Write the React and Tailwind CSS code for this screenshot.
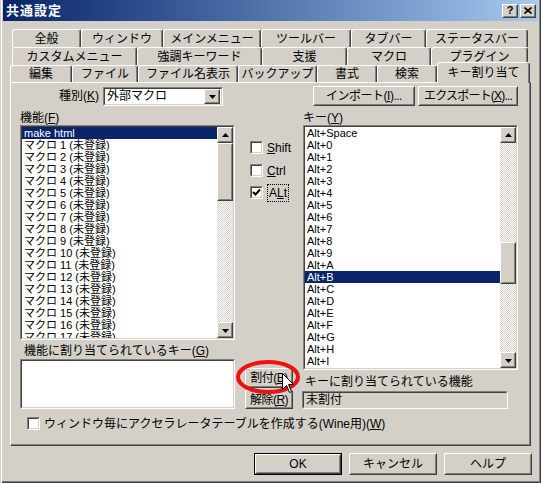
import React from 'react';

const Raised = ({ className = '', inner = '', children }) => (
  <div className={`border border-t-white border-l-white border-r-[#404040] border-b-[#404040] bg-[#d4d0c8] ${className}`}>
    <div className={`h-full w-full border border-t-[#d4d0c8] border-l-[#d4d0c8] border-r-[#808080] border-b-[#808080] flex items-center justify-center whitespace-nowrap ${inner}`}>
      {children}
    </div>
  </div>
);

const Sunken = ({ className = '', inner = '', children }) => (
  <div className={`border border-t-[#808080] border-l-[#808080] border-r-white border-b-white ${className}`}>
    <div className={`h-full w-full border border-t-[#404040] border-l-[#404040] border-r-[#d4d0c8] border-b-[#d4d0c8] ${inner}`}>
      {children}
    </div>
  </div>
);

const U = ({ children }) => <span className="underline underline-offset-[1px]">{children}</span>;

const Arrow = ({ down }) => (
  <svg width="7" height="4" viewBox="0 0 7 4" className={down ? 'mt-[1px]' : ''}>
    <path d={down ? 'M0 0 H7 L3.5 4 Z' : 'M0 4 H7 L3.5 0 Z'} fill="#000" />
  </svg>
);

const Check = () => (
  <svg width="9" height="9" viewBox="0 0 9 9">
    <polyline points="1,4 3.5,6.5 8,1.5" fill="none" stroke="#000" strokeWidth="2" />
  </svg>
);

const track = "bg-[image:repeating-conic-gradient(#ffffff_0%_25%,#d4d0c8_0%_50%)] bg-[length:2px_2px]";

const ScrollBar = ({ before, thumb }) => (
  <div className="w-[16px] h-full flex flex-col">
    <Raised className="h-[16px] w-[16px] shrink-0"><Arrow /></Raised>
    <div className={`${before} ${track} shrink-0`} />
    <Raised className={`${thumb} w-[16px] shrink-0`} />
    <div className={`flex-1 ${track}`} />
    <Raised className="h-[16px] w-[16px] shrink-0"><Arrow down /></Raised>
  </div>
);

const ListBox = ({ items, selected, className, before, thumb }) => (
  <Sunken className={className} inner="bg-white flex">
    <div className="flex-1 overflow-hidden">
      {items.map((t, i) => (
        <div
          key={t}
          className={`h-[12px] text-[11px] leading-[12px] pl-[2px] whitespace-nowrap overflow-hidden ${i === selected ? 'bg-[#0a246a] text-white' : ''}`}
        >
          {t}
        </div>
      ))}
    </div>
    <ScrollBar before={before} thumb={thumb} />
  </Sunken>
);

const CheckBox = ({ checked, children, className = '' }) => (
  <div className={`flex items-center h-[13px] ${className}`}>
    <Sunken className="w-[13px] h-[13px] shrink-0" inner="bg-white flex items-center justify-center">
      {checked && <Check />}
    </Sunken>
    <div className="ml-[4px] whitespace-nowrap">{children}</div>
  </div>
);

const Tab = ({ w, children, sel }) => (
  <div
    className={`${w} ${sel ? 'h-[21px] -mb-[1px] relative z-10 bg-[#d4d0c8]' : 'h-full'} shrink-0 border-t border-l border-white border-r border-r-[#404040] rounded-t-[3px] shadow-[inset_-1px_0_0_#808080] flex items-center justify-center whitespace-nowrap`}
  >
    {children}
  </div>
);

const macros = ['make html', ...Array.from({ length: 17 }, (_, i) => `マクロ ${i + 1} (未登録)`)];
const keys = [
  'Alt+Space',
  ...'0123456789ABCDEFGHIJ'.split('').map((c) => `Alt+${c}`),
];

export default function App() {
  return (
    <div className="relative w-[541px] h-[483px] overflow-hidden bg-[#d4d0c8] text-black text-[12px] leading-[12px] font-['Liberation_Sans','Noto_Sans_CJK_JP',sans-serif] shadow-[inset_1px_0_0_#d4d0c8,inset_2px_0_0_#ffffff,inset_-1px_-1px_0_#404040,inset_-2px_-2px_0_#808080]">
      {/* title bar */}
      <div className="mx-[3px] h-[21px] bg-linear-to-r from-[#0a246a] to-[#a6caf0] flex items-center pl-[3px] pr-[2px]">
        <span className="font-bold text-white text-[13px] leading-[13px] tracking-[1px]">共通設定</span>
        <div className="ml-auto flex gap-[2px]">
          <Raised className="w-[16px] h-[14px]" inner="font-bold text-[11px] leading-[11px]">?</Raised>
          <Raised className="w-[16px] h-[14px]">
            <svg width="8" height="7" viewBox="0 0 8 7">
              <path d="M0.5 0.5 L7.5 6.5 M7.5 0.5 L0.5 6.5" stroke="#000" strokeWidth="1.6" />
            </svg>
          </Raised>
        </div>
      </div>

      {/* tabs */}
      <div className="mt-[8px]">
        <div className="flex h-[18px] pl-[12px]">
          <Tab w="w-[69px]">全般</Tab>
          <Tab w="w-[82px]">ウィンドウ</Tab>
          <Tab w="w-[98px]">メインメニュー</Tab>
          <Tab w="w-[90px]">ツールバー</Tab>
          <Tab w="w-[75px]">タブバー</Tab>
          <Tab w="w-[102px]">ステータスバー</Tab>
        </div>
        <div className="flex h-[18px] pl-[12px]">
          <Tab w="w-[125px]">カスタムメニュー</Tab>
          <Tab w="w-[125px]">強調キーワード</Tab>
          <Tab w="w-[85px]">支援</Tab>
          <Tab w="w-[84px]">マクロ</Tab>
          <Tab w="w-[97px]">プラグイン</Tab>
        </div>
        <div className="flex items-end h-[17px] pl-[10px]">
          <Tab w="w-[62px]">編集</Tab>
          <Tab w="w-[66px]">ファイル</Tab>
          <Tab w="w-[100px]">ファイル名表示</Tab>
          <Tab w="w-[79px]">バックアップ</Tab>
          <Tab w="w-[60px]">書式</Tab>
          <Tab w="w-[60px]">検索</Tab>
          <Tab w="w-[93px]" sel>キー割り当て</Tab>
        </div>
      </div>

      {/* panel */}
      <div className="ml-[10px] w-[521px] h-[364px] border-l border-t border-white border-r border-b border-r-[#404040] border-b-[#404040]">
        <div className="h-full border-r border-b border-[#808080] pl-[9px] pt-[3px]">
          <div className="flex items-center h-[20px]">
            <div className="w-[83px] text-right pr-[4px]">種別(<U>K</U>)</div>
            <Sunken className="w-[120px] h-[19px]" inner="bg-white flex items-center pl-[2px] pr-[1px]">
              <span className="flex-1">外部マクロ</span>
              <Raised className="w-[16px] h-[15px]"><Arrow down /></Raised>
            </Sunken>
            <Raised className="ml-[90px] w-[102px] h-[20px]" inner="tracking-[-0.5px]">インポート(<U>I</U>)...</Raised>
            <Raised className="ml-[3px] w-[100px] h-[20px]" inner="tracking-[-0.8px]">エクスポート(<U>X</U>)...</Raised>
          </div>

          <div className="flex items-start">
            {/* left */}
            <div className="w-[215px] flex flex-col">
              <div className="h-[19px] flex items-end pb-[1px]">機能(<U>F</U>)</div>
              <ListBox items={macros} selected={0} className="w-[215px] h-[215px]" before="h-0" thumb="h-[58px]" />
              <div className="h-[19px] flex items-end pl-[4px] pb-[2px]">機能に割り当てられているキー(<U>G</U>)</div>
              <Sunken className="w-[215px] h-[50px]" inner="bg-white" />
            </div>

            {/* middle */}
            <div className="w-[67px] flex flex-col pt-[35px]">
              <CheckBox className="pl-[15px]"><U>S</U>hift</CheckBox>
              <CheckBox className="pl-[15px] mt-[10px]"><U>C</U>trl</CheckBox>
              <CheckBox className="pl-[15px] mt-[9px]" checked>
                <span className="border border-dotted border-black px-[1px] py-[1px]">A<U>L</U>t</span>
              </CheckBox>
              <Raised className="ml-[10px] mt-[169px] w-[48px] h-[20px]" inner="tracking-[-0.5px]">割付(<U>B</U>)</Raised>
              <Raised className="ml-[10px] mt-[2px] w-[48px] h-[19px]" inner="tracking-[-0.5px]">解除(<U>R</U>)</Raised>
            </div>

            {/* right */}
            <div className="w-[216px] flex flex-col">
              <div className="h-[19px] flex items-end pb-[1px] pl-[1px]">キー(<U>Y</U>)</div>
              <ListBox items={keys} selected={12} className="ml-[1px] w-[215px] h-[245px]" before="h-[99px]" thumb="h-[42px]" />
              <div className="h-[21px] flex items-end pl-[3px] pb-[3px]">キーに割り当てられている機能</div>
              <Sunken className="w-[206px] h-[18px]" inner="bg-[#d4d0c8] flex items-center pl-[2px]">未割付</Sunken>
            </div>
          </div>

          <CheckBox className="mt-[8px] ml-[7px]">ウィンドウ毎にアクセラレータテーブルを作成する(Wine用)(<U>W</U>)</CheckBox>
        </div>
      </div>

      {/* bottom buttons */}
      <div className="flex mt-[7px] pl-[254px] gap-[7px]">
        <div className="w-[88px] h-[22px] border border-black">
          <Raised className="w-full h-full">OK</Raised>
        </div>
        <Raised className="w-[88px] h-[22px]">キャンセル</Raised>
        <Raised className="w-[88px] h-[22px]">ヘルプ</Raised>
      </div>

      {/* annotation overlays */}
      <svg className="absolute left-[236px] top-[360px]" width="66" height="35" viewBox="0 0 66 35">
        <ellipse cx="32" cy="17" rx="30" ry="15" fill="none" stroke="#ee1111" strokeWidth="4" />
      </svg>
      <svg className="absolute left-[282px] top-[373px]" width="13" height="21" viewBox="0 0 13 21">
        <path d="M0.5 0.5 V16.5 L4.5 12.5 L7.5 19.5 L9.5 18.5 L6.5 11.5 H11.5 Z" fill="#fff" stroke="#000" strokeWidth="1" />
      </svg>
    </div>
  );
}
